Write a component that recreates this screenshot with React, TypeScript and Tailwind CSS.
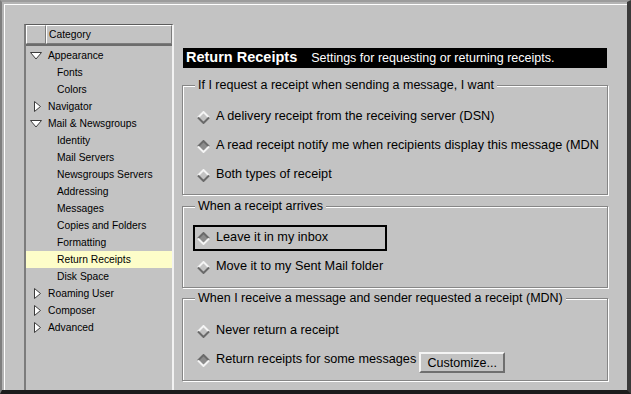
import React from "react";

type Node = { label: string; level: number; icon?: "open" | "closed"; selected?: boolean };

const tree: Node[] = [
  { label: "Appearance", level: 0, icon: "open" },
  { label: "Fonts", level: 1 },
  { label: "Colors", level: 1 },
  { label: "Navigator", level: 0, icon: "closed" },
  { label: "Mail & Newsgroups", level: 0, icon: "open" },
  { label: "Identity", level: 1 },
  { label: "Mail Servers", level: 1 },
  { label: "Newsgroups Servers", level: 1 },
  { label: "Addressing", level: 1 },
  { label: "Messages", level: 1 },
  { label: "Copies and Folders", level: 1 },
  { label: "Formatting", level: 1 },
  { label: "Return Receipts", level: 1, selected: true },
  { label: "Disk Space", level: 1 },
  { label: "Roaming User", level: 0, icon: "closed" },
  { label: "Composer", level: 0, icon: "closed" },
  { label: "Advanced", level: 0, icon: "closed" },
];

function Twisty({ open }: { open: boolean }) {
  if (open) {
    return (
      <svg width="12" height="8" className="ml-[4px] mr-[6px]">
        <polygon points="0.5,0.5 11.5,0.5 6,7" fill="#fff" stroke="#3c3c3c" />
      </svg>
    );
  }
  return (
    <svg width="7" height="11" className="ml-[8px] mr-[7px]">
      <polygon points="0.5,0.5 6.5,5.5 0.5,10.5" fill="#fff" stroke="#3c3c3c" />
    </svg>
  );
}

function Diamond({ on }: { on: boolean }) {
  return (
    <svg width="13" height="13" className="shrink-0">
      <polygon points="6.5,1 12,6.5 6.5,12 1,6.5" fill={on ? "#8c8c8c" : "#c3c3c3"} />
      <polyline points="1,6.5 6.5,1 12,6.5" fill="none" strokeWidth="2" stroke={on ? "#6a6a6a" : "#f4f4f4"} />
      <polyline points="1,6.5 6.5,12 12,6.5" fill="none" strokeWidth="2" stroke={on ? "#f4f4f4" : "#6a6a6a"} />
    </svg>
  );
}

function Radio({ label, on, focus, children }: { label: string; on?: boolean; focus?: boolean; children?: React.ReactNode }) {
  return (
    <div
      className={
        focus
          ? "flex items-center h-[26px] w-[194px] ml-[10px] pl-[2px] border-2 border-black"
          : "flex items-center h-[26px] ml-[10px] pl-[2px] border-2 border-transparent"
      }
    >
      <Diamond on={!!on} />
      <span className="ml-[6px] whitespace-nowrap text-[12.7px]">{label}</span>
      {children}
    </div>
  );
}

function Group({ label, className, children }: { label: string; className: string; children: React.ReactNode }) {
  return (
    <fieldset className={"border border-[#868686] shadow-[inset_1px_1px_0_#fff,1px_1px_0_#fff] " + className}>
      <legend className="ml-[12px] px-[3px] leading-[14px] bg-[#c3c3c3]">{label}</legend>
      {children}
    </fieldset>
  );
}

export default function App() {
  return (
    <div className="w-[631px] h-[394px] flex bg-[#b4b4b4] border-l-2 border-l-[#7e7e7e] border-t-2 border-t-[#9c9c9c] border-r-4 border-r-[#3a3a3a] border-b-4 border-b-[#1c1c1c] pl-[2px] pt-[2px] font-['Liberation_Sans',Arial,sans-serif] text-black">
      <div className="flex-1 flex bg-[#c3c3c3] border-t border-l border-white min-w-0">
        {/* category tree */}
        <div className="w-[150px] mt-[19px] ml-[19px] flex flex-col border-l-2 border-l-[#7c7c7c] border-t border-t-[#5c5c5c] border-r-2 border-r-[#f2f2f2]">
          <div className="flex h-[21px] text-[10.3px] border-b-2 border-b-[#6c6c6c]">
            <div className="w-[20px] border-t border-l border-t-white border-l-white border-r border-b border-r-[#7c7c7c] border-b-[#7c7c7c]" />
            <div className="flex-1 flex items-center pl-[2px] pt-[1px] border-t border-l border-t-white border-l-white border-r border-b border-r-[#7c7c7c] border-b-[#7c7c7c]">
              Category
            </div>
          </div>
          <div className="flex flex-col pt-[1px] text-[10.3px]">
            {tree.map((n) => (
              <div
                key={n.label}
                className={n.selected ? "flex items-center h-[17px] bg-[#fdfdc9]" : "flex items-center h-[17px]"}
              >
                {n.level === 0 ? <Twisty open={n.icon === "open"} /> : <span className="w-[31px]" />}
                <span className="whitespace-nowrap">{n.label}</span>
              </div>
            ))}
          </div>
        </div>

        {/* right pane */}
        <div className="flex-1 flex flex-col pt-[43px] pl-[8px] pr-[19px] text-[12.5px] min-w-0">
          <div className="mx-[1px] h-[20px] bg-black text-white flex items-center pl-[3px] whitespace-nowrap">
            <span className="text-[14.5px] font-bold">Return Receipts</span>
            <span className="ml-[14px]">Settings for requesting or returning receipts.</span>
          </div>

          <Group label="If I request a receipt when sending a message, I want" className="mt-[10px] pt-[12px] pb-[6px]">
            <div className="flex flex-col gap-[3px]">
              <Radio label="A delivery receipt from the receiving server (DSN)" />
              <Radio label="A read receipt notify me when recipients display this message (MDN" on />
              <Radio label="Both types of receipt" />
            </div>
          </Group>

          <Group label="When a receipt arrives" className="mt-[4px] pt-[12px] pb-[7px]">
            <div className="flex flex-col gap-[3px]">
              <Radio label="Leave it in my inbox" on focus />
              <Radio label="Move it to my Sent Mail folder" />
            </div>
          </Group>

          <Group label="When I receive a message and sender requested a receipt (MDN)" className="mt-[3px] pt-[13px] pb-[7px]">
            <div className="flex flex-col gap-[3px]">
              <Radio label="Never return a receipt" />
              <Radio label="Return receipts for some messages" on>
                <button className="ml-[3px] mt-[5px] w-[86px] h-[21px] bg-[#c3c3c3] border-2 border-t-[#f4f4f4] border-l-[#f4f4f4] border-r-[#6e6e6e] border-b-[#6e6e6e] text-[12.5px]">
                  Customize...
                </button>
              </Radio>
            </div>
          </Group>
        </div>
      </div>
    </div>
  );
}
